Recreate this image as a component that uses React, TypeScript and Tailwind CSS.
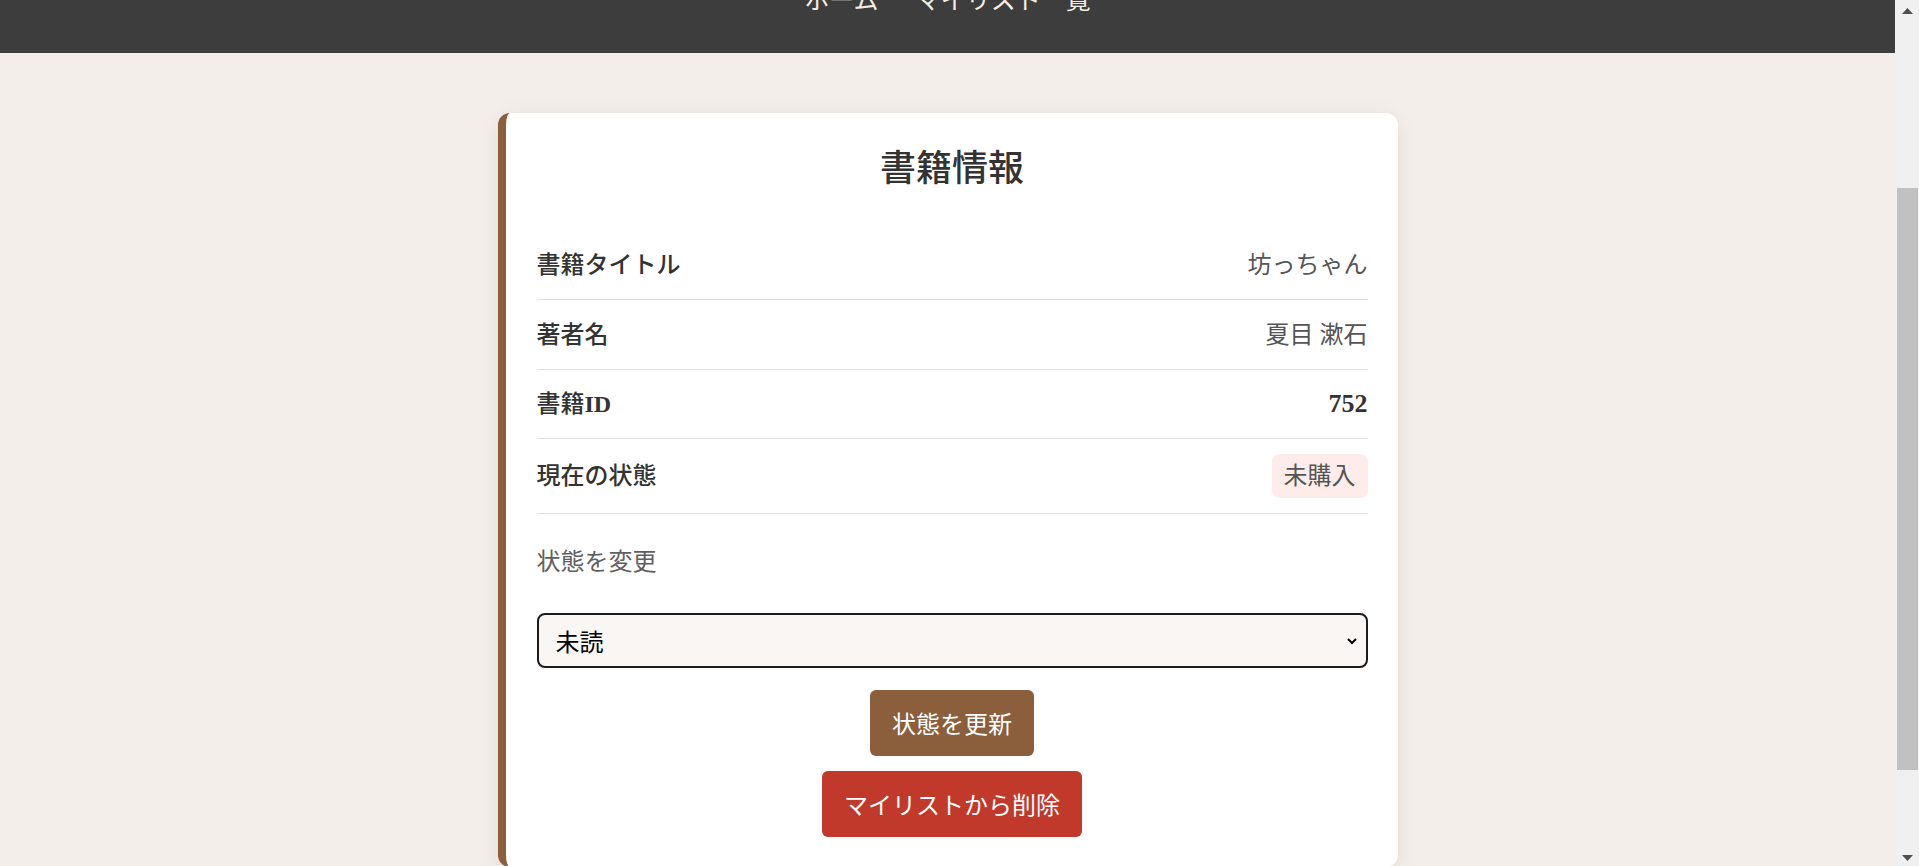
import React from "react";

const rows = [
  { label: "書籍タイトル", value: "坊っちゃん", h: "h-[70px]", kind: "text" },
  { label: "著者名", value: "夏目 漱石", h: "h-[70px]", kind: "text" },
  { label: "書籍ID", value: "752", h: "h-[69px]", kind: "num" },
  { label: "現在の状態", value: "未購入", h: "h-[75px]", kind: "badge" },
];

export default function App() {
  return (
    <div className="flex h-[866px] w-full overflow-hidden bg-[#f3eee9] font-['Liberation_Serif','Noto_Sans_CJK_JP',serif]">
      <div className="flex min-w-0 flex-1 flex-col">
        <header className="flex h-[53px] shrink-0 justify-center overflow-hidden bg-[#3d3d3d]">
          <nav className="-mt-[14px] flex items-start gap-[37px] font-['Noto_Sans_CJK_JP',sans-serif] text-[25px] leading-none text-[#f4ede2]">
            <a className="block">ホーム</a>
            <a className="block">マイリスト一覧</a>
          </nav>
        </header>
        <main className="flex-1">
          <section className="mx-auto mt-[60px] w-[900px] rounded-xl border-l-[8px] border-[#8b5e3c] bg-white pb-[30px] pl-[31px] pr-[30px] pt-[30px] shadow-[0_4px_20px_rgba(0,0,0,0.08)]">
            <h1 className="mb-[35px] h-[52px] text-center text-[36px] font-medium leading-[52px] text-[#333333]">
              書籍情報
            </h1>
            <div className="flex flex-col">
              {rows.map((r) => (
                <div
                  key={r.label}
                  className={`flex items-center justify-between border-b border-[#e0e0e0] ${r.h}`}
                >
                  <span className="text-[24px] font-medium leading-[36px] text-[#333333]">
                    {r.label === "書籍ID" ? (
                      <>
                        書籍<span className="font-bold">ID</span>
                      </>
                    ) : (
                      r.label
                    )}
                  </span>
                  {r.kind === "badge" ? (
                    <span className="flex h-[44px] items-center rounded-lg bg-[#fdecea] px-[12px] text-[24px] leading-none text-[#555555]">
                      {r.value}
                    </span>
                  ) : r.kind === "num" ? (
                    <span className="text-[26px] font-semibold leading-[36px] text-[#333333]">{r.value}</span>
                  ) : (
                    <span className="text-[24px] leading-[36px] text-[#555555]">{r.value}</span>
                  )}
                </div>
              ))}
            </div>
            <div className="mt-[30px] h-[36px] text-[24px] leading-[36px] text-[#5f5f5f]">
              状態を変更
            </div>
            <div className="relative mt-[33px]">
              <select
                defaultValue="未読"
                className="block h-[55px] w-full appearance-none rounded-lg border-2 border-[#1c1c1c] bg-[#faf6f3] pl-[17px] font-['Noto_Sans_CJK_JP',sans-serif] text-[24px] text-black outline-none"
              >
                <option>未読</option>
                <option>読書中</option>
                <option>読了</option>
                <option>未購入</option>
              </select>
              <svg
                className="pointer-events-none absolute right-[10px] top-1/2 -translate-y-1/2"
                width="12"
                height="9"
                viewBox="0 0 12 9"
              >
                <path d="M2 2.5 L6 6.5 L10 2.5" fill="none" stroke="#000" strokeWidth="2" />
              </svg>
            </div>
            <div className="mt-[22px] flex flex-col items-center gap-[15px] font-['Noto_Sans_CJK_JP',sans-serif]">
              <button className="h-[66px] rounded-md bg-[#8b5e3c] px-[22px] text-[24px] leading-none text-white">
                状態を更新
              </button>
              <button className="h-[66px] rounded-md bg-[#c0392b] px-[22px] text-[24px] leading-none text-white">
                マイリストから削除
              </button>
            </div>
          </section>
        </main>
      </div>
      <div className="flex w-[24px] shrink-0 flex-col bg-[#f0f0f0]">
        <div className="flex h-[188px] shrink-0 justify-center pt-[8px] pl-[1px]">
          <svg width="11" height="6" viewBox="0 0 11 6">
            <path d="M0 6 L5.5 0 L11 6 Z" fill="#505050" />
          </svg>
        </div>
        <div className="h-[582px] shrink-0 pl-[2px] pr-[1px]">
          <div className="h-full w-full bg-[#c1c1c1]" />
        </div>
        <div className="flex flex-1 items-end justify-center pb-[5px] pl-[1px]">
          <svg width="11" height="6" viewBox="0 0 11 6">
            <path d="M0 0 L11 0 L5.5 6 Z" fill="#505050" />
          </svg>
        </div>
      </div>
    </div>
  );
}
